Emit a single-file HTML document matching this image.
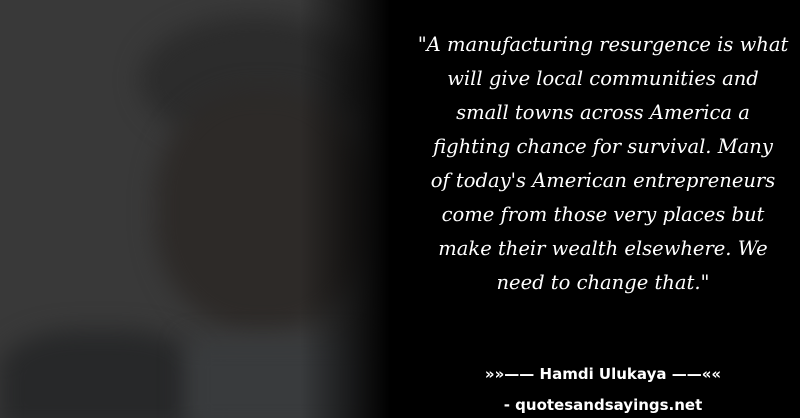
<!DOCTYPE html>
<html><head><style>
html,body{margin:0;width:800px;height:418px;overflow:hidden}
body{background:#000;position:relative;font-family:"Liberation Sans",sans-serif}
.bg{position:absolute;left:0;top:0;width:400px;height:418px;background:#393939;overflow:hidden}
.b{position:absolute;filter:blur(12px)}
.fade{position:absolute;left:300px;top:0;width:100px;height:418px;background:linear-gradient(90deg,rgba(0,0,0,0),#000 90%)}
.q{position:absolute;left:395px;width:416px;top:28px;text-align:center;color:#fff;font-family:"DejaVu Serif",serif;font-style:italic;font-size:19.5px;line-height:34px}
.a{position:absolute;left:405px;width:396px;text-align:center;color:#fff;font-weight:bold;font-size:15px;line-height:18px;font-family:"DejaVu Sans",sans-serif}
</style></head><body>
<div class="bg">
<div class="b" style="left:140px;top:15px;width:230px;height:130px;border-radius:50%;background:#2c2c2c"></div>
<div class="b" style="left:155px;top:90px;width:215px;height:240px;border-radius:45%;background:#2d2a28"></div>
<div class="b" style="left:0px;top:330px;width:200px;height:100px;border-radius:40% 40% 0 0;background:#272829"></div>
<div class="b" style="left:185px;top:340px;width:180px;height:90px;background:#393b3d"></div>
</div>
<div class="fade"></div>
<div class="q">"A manufacturing resurgence is what<br>will give local communities and<br>small towns across America a<br>fighting chance for survival. Many<br>of today's American entrepreneurs<br>come from those very places but<br>make their wealth elsewhere. We<br>need to change that."</div>
<div class="a" style="top:365px">»»—— Hamdi Ulukaya ——««</div>
<div class="a" style="top:396px">- quotesandsayings.net</div>
</body></html>
